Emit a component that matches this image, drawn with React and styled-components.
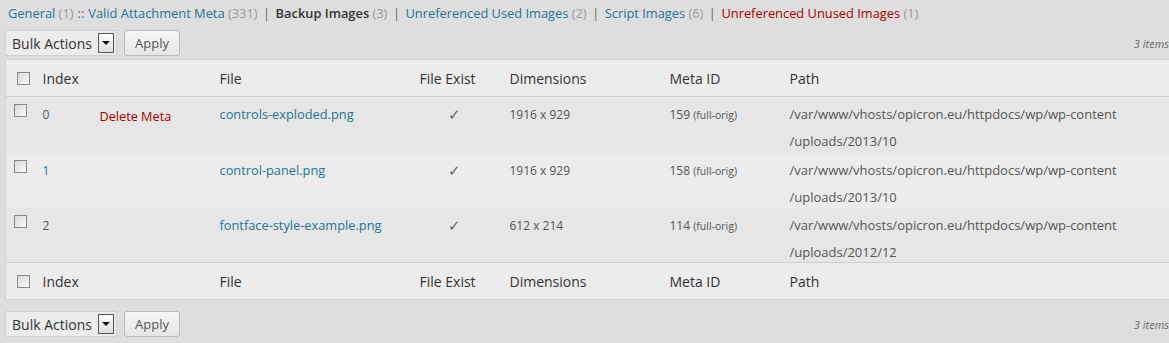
import styled, { createGlobalStyle } from "styled-components";

const Global = createGlobalStyle`
	html, body {
		margin: 0;
		background: #dedede;
		font-family: "Open Sans", "Liberation Sans", sans-serif;
		color: #333;
	}
`;

const Page = styled.div`
	padding: 3px 0 0 5px;
	width: 1164px;
`;
const Nav = styled.ul`
	display: flex;
	margin: 0 0 0 3px;
	padding: 0;
	list-style: none;
	font-size: 12.85px;
	line-height: 20px;
	color: #666;
`;
const NavItem = styled.li`
	white-space: pre;
	color: ${p => p.current ? "#333" : p.danger ? "#a00" : "#21759b"};
	font-weight: ${p => p.current ? 600 : 400};
`;
const Count = styled.span`
	color: #999;
	font-weight: 400;
`;
const Sep = styled.li`
	white-space: pre;
	margin: 0 ${p => p.wide ? 5.5 : 4}px;
	color: ${p => p.wide ? "#666" : "#21759b"};
`;
const Tablenav = styled.div`
	display: flex;
	align-items: center;
	gap: 7px;
	height: 26px;
	margin: ${p => p.bottom ? "11px 0 0" : "7px 0 3px"};
`;
const Select = styled.div`
	display: flex;
	align-items: center;
	justify-content: space-between;
	box-sizing: border-box;
	width: 112px;
	height: 26px;
	padding: 0 2px 0 6px;
	background: #ececec;
	border: 1px solid #d0d0d0;
	font-size: 14px;
	color: #333;
`;
const Arrow = styled.span`
	display: flex;
	align-items: center;
	justify-content: center;
	box-sizing: border-box;
	width: 16px;
	height: 20px;
	border: 1px solid #555;
	background: linear-gradient(#fff, #ddd);
	&::after {
		content: "";
		border: 4px solid transparent;
		border-top: 4px solid #111;
		border-bottom: 0;
	}
`;
const Button = styled.div`
	box-sizing: border-box;
	height: 26px;
	padding: 0 10px;
	border: 1px solid #bbb;
	border-radius: 3px;
	background: linear-gradient(#f6f6f6, #e6e6e6);
	font-size: 13px;
	line-height: 24px;
	color: #555;
`;
const Count3 = styled.span`
	margin-left: auto;
	font-size: 11px;
	font-style: italic;
	color: #666;
`;
const Table = styled.table`
	width: 100%;
	border-collapse: collapse;
	border-left: 1px solid #d2d2d2;
	border-top: 1px solid #d6d6d6;
	border-bottom: 1px solid #d2d2d2;
	table-layout: fixed;
`;
const Th = styled.th`
	height: 36px;
	padding: 0 5px;
	text-align: left;
	font-size: 14px;
	font-weight: 400;
	color: #333;
	background: #ececec;
	border-${p => p.foot ? "top" : "bottom"}: 1px solid #cfcfcf;
	&:first-child {
		padding: 0 0 0 11px;
	}
`;
const Row = styled.tr`
	background: ${p => p.alt ? "#ececec" : "#e6e6e6"};
`;
const Td = styled.td`
	height: ${p => p.first ? 56 : 55}px;
	padding: 4px 5px 0;
	vertical-align: top;
	font-size: 12px;
	line-height: 27px;
	color: ${p => p.link ? "#21759b" : "#555"};
	box-sizing: border-box;
	&:first-child {
		padding: 4px 0 0 8px;
	}
`;
const FileLink = styled.span`
	font-size: 12.8px;
	color: #21759b;
`;
const Delete = styled.span`
	font-size: 12.7px;
	color: #a00;
	position: relative;
	top: 2px;
`;
const Small = styled.span`
	font-size: 10.5px;
`;
const Tick = styled.span`
	margin-left: 28px;
	font-size: 15px;
	color: #666;
`;
const Check = styled.span`
	display: block;
	box-sizing: border-box;
	width: 13px;
	height: 13px;
	margin-top: ${p => p.head ? "0" : "3px"};
	border: 1px solid #888;
	background: linear-gradient(135deg, #d8d8d8, #fafafa);
`;
const PathLine = styled.span`
	display: block;
	font-size: 13px;
	& + & {
		height: 22px;
	}
`;

const rows = [
	{ index: "0", del: true, file: "controls-exploded.png", dims: "1916 x 929", meta: "159", path: "2013/10" },
	{ index: "1", link: true, file: "control-panel.png", dims: "1916 x 929", meta: "158", path: "2013/10" },
	{ index: "2", file: "fontface-style-example.png", dims: "612 x 214", meta: "114", path: "2012/12" },
];

const Head = ({ foot }) => (
	<tr>
		<Th foot={foot}><Check head /></Th>
		<Th foot={foot}>Index</Th>
		<Th foot={foot}></Th>
		<Th foot={foot}>File</Th>
		<Th foot={foot}>File Exist</Th>
		<Th foot={foot}>Dimensions</Th>
		<Th foot={foot}>Meta ID</Th>
		<Th foot={foot}>Path</Th>
	</tr>
);

const Actions = ({ bottom }) => (
	<Tablenav bottom={bottom}>
		<Select>Bulk Actions<Arrow /></Select>
		<Button>Apply</Button>
		<Count3>3 items</Count3>
	</Tablenav>
);

const App = () => (
	<Page>
		<Global />
		<Nav>
			<NavItem>General <Count>(1)</Count></NavItem>
			<Sep>::</Sep>
			<NavItem>Valid Attachment Meta <Count>(331)</Count></NavItem>
			<Sep wide>|</Sep>
			<NavItem current>Backup Images <Count>(3)</Count></NavItem>
			<Sep wide>|</Sep>
			<NavItem>Unreferenced Used Images <Count>(2)</Count></NavItem>
			<Sep wide>|</Sep>
			<NavItem>Script Images <Count>(6)</Count></NavItem>
			<Sep wide>|</Sep>
			<NavItem danger>Unreferenced Unused Images <Count>(1)</Count></NavItem>
		</Nav>
		<Actions />
		<Table>
			<colgroup>
				<col style={{ width: 32 }} />
				<col style={{ width: 57 }} />
				<col style={{ width: 120 }} />
				<col style={{ width: 200 }} />
				<col style={{ width: 90 }} />
				<col style={{ width: 160 }} />
				<col style={{ width: 120 }} />
				<col />
			</colgroup>
			<thead><Head /></thead>
			<tbody>
				{rows.map((r, i) => (
					<Row key={r.index} alt={i % 2 === 1}>
						<Td first={i === 0}><Check /></Td>
						<Td link={r.link}>{r.index}</Td>
						<Td>{r.del ? <Delete>Delete Meta</Delete> : null}</Td>
						<Td><FileLink>{r.file}</FileLink></Td>
						<Td><Tick>✓</Tick></Td>
						<Td>{r.dims}</Td>
						<Td>{r.meta} <Small>(full-orig)</Small></Td>
						<Td>
							<PathLine>/var/www/vhosts/opicron.eu/httpdocs/wp/wp-content</PathLine>
							<PathLine>/uploads/{r.path}</PathLine>
						</Td>
					</Row>
				))}
			</tbody>
			<tfoot><Head foot /></tfoot>
		</Table>
		<Actions bottom />
	</Page>
);

export default App;
